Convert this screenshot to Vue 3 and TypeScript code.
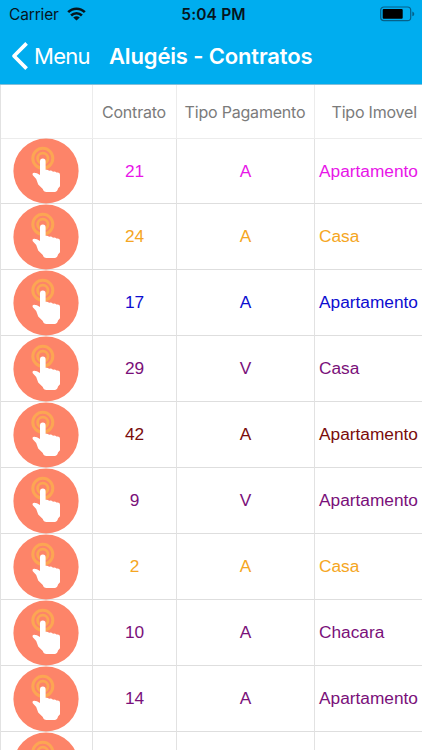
<script setup lang="ts">
interface Contract {
  id: number | string
  payment: string
  property: string
  tone: string
}

const contracts: Contract[] = [
  { id: 21, payment: 'A', property: 'Apartamento', tone: 'magenta' },
  { id: 24, payment: 'A', property: 'Casa', tone: 'orange' },
  { id: 17, payment: 'A', property: 'Apartamento', tone: 'blue' },
  { id: 29, payment: 'V', property: 'Casa', tone: 'purple' },
  { id: 42, payment: 'A', property: 'Apartamento', tone: 'maroon' },
  { id: 9, payment: 'V', property: 'Apartamento', tone: 'purple' },
  { id: 2, payment: 'A', property: 'Casa', tone: 'orange' },
  { id: 10, payment: 'A', property: 'Chacara', tone: 'purple' },
  { id: 14, payment: 'A', property: 'Apartamento', tone: 'purple' },
  { id: '', payment: '', property: '', tone: 'purple' },
]
</script>

<template>
  <div class="screen">
    <header class="top">
      <div class="status">
        <div class="network">
          <span class="carrier">Carrier</span>
          <svg class="wifi" width="19" height="14" viewBox="0 0 19 14" fill="none" stroke="#06151d" stroke-width="2.6">
            <path d="M1.2 5.2C5.8.5 13.2.5 17.8 5.2" />
            <path d="M4.1 8.5C7.1 5.5 11.9 5.5 14.9 8.5" />
            <path d="M9.5 13.4L6.2 10.4Q9.5 7.9 12.8 10.4Z" fill="#06151d" stroke="none" />
          </svg>
        </div>
        <span class="time">5:04 PM</span>
        <svg class="battery" width="35" height="16" viewBox="0 0 35 16">
          <rect x=".7" y="1" width="30" height="13.7" rx="3.2" fill="none" stroke="#05618a" stroke-width="1.2" />
          <rect x="2.7" y="3" width="20" height="9.7" rx="1" fill="#000" />
          <path d="M32.3 5.5Q34.3 6.3 34.3 7.9Q34.3 9.5 32.3 10.3Z" fill="#05618a" />
        </svg>
      </div>
      <nav class="nav">
        <button class="back" type="button">
          <svg width="18" height="28" viewBox="0 0 18 28" fill="none" stroke="#fff" stroke-width="3.7" stroke-linejoin="round">
            <path d="M15.6 1.4L3 14L15.6 26.6" />
          </svg>
          <span>Menu</span>
        </button>
        <h1>Alugéis - Contratos</h1>
      </nav>
    </header>

    <main class="grid">
      <div class="row head">
        <div class="cell"></div>
        <div class="cell">Contrato</div>
        <div class="cell">Tipo Pagamento</div>
        <div class="cell kind">Tipo Imovel</div>
      </div>
      <div v-for="(c, i) in contracts" :key="i" class="row" :class="[c.tone, { first: i === 0 }]">
        <div class="cell action">
          <svg class="tap" width="66" height="66" viewBox="0 0 66 66">
            <circle cx="33" cy="33" r="32.6" fill="#fd8469" />
            <g fill="none" stroke="#fca653">
              <circle cx="29.8" cy="20.3" r="10" stroke-width="3" />
              <circle cx="29.8" cy="20.3" r="5.2" stroke-width="2.8" />
            </g>
            <path
              d="M27 23.4Q27 20.6 29.8 20.6Q32.6 20.6 32.6 23.4V31.8Q34.4 31.2 36.2 32.8Q38.2 32.1 40 33.7Q42 33 43.4 34.4H44.6Q47 34.4 47 36.8V48.2L45 50.6Q44.4 54 41.5 54H33.5Q30.5 54 29.8 51L25.2 46.6L23.2 40.9L19.8 37.2Q18.8 35 21.2 34.7Q23.8 34.7 27 37Z"
              fill="#fff"
            />
          </svg>
        </div>
        <div class="cell">{{ c.id }}</div>
        <div class="cell">{{ c.payment }}</div>
        <div class="cell kind">{{ c.property }}</div>
      </div>
    </main>
  </div>
</template>

<style>
body {
  overflow: hidden;
}
</style>

<style scoped>
.screen {
  width: 422px;
  height: 750px;
  overflow: hidden;
  background: #fff;
  display: flex;
  flex-direction: column;
}
.top {
  flex: none;
  height: 85px;
  box-sizing: border-box;
  background: #00adef;
  border-bottom: 1px solid #83bfd9;
  font-family: Inter, sans-serif;
}
.status {
  height: 28px;
  display: grid;
  grid-template-columns: 1fr auto 1fr;
  align-items: center;
  padding: 0 7px 0 9px;
  color: #06151d;
  font-size: 15.5px;
}
.network {
  display: flex;
  align-items: center;
  gap: 8px;
}
.carrier {
  letter-spacing: -0.15px;
}
.wifi {
  margin-bottom: 1px;
}
.time {
  padding-left: 3px;
  font-weight: 600;
  letter-spacing: 0.15px;
}
.battery {
  justify-self: end;
}
.nav {
  height: 56px;
  display: flex;
  align-items: center;
  padding-left: 11px;
  color: #fff;
}
.back {
  display: flex;
  align-items: center;
  gap: 5px;
  width: 98px;
  padding: 0;
  border: 0;
  background: none;
  color: inherit;
  font: 400 22px Inter, sans-serif;
  letter-spacing: -0.7px;
}
h1 {
  margin: 0;
  font-size: 22px;
  font-weight: 600;
  letter-spacing: -0.15px;
  white-space: nowrap;
}
.grid {
  flex: none;
  border-left: 1px solid #e2e2e2;
}
.row {
  display: grid;
  grid-template-columns: 92px 84px 138px 107px;
  height: 66px;
  font-family: "Liberation Sans", Arial, sans-serif;
  font-size: 17.3px;
}
.row.first {
  height: 65px;
}
.head {
  height: 54px;
  color: #7b7b7b;
  font-family: Inter, sans-serif;
  font-size: 16px;
  letter-spacing: -0.2px;
}
.cell {
  box-sizing: border-box;
  min-width: 0;
  min-height: 0;
  display: flex;
  align-items: center;
  justify-content: center;
  border-right: 1px solid #e2e2e2;
  border-bottom: 1px solid #dedede;
  white-space: nowrap;
}
.head .cell {
  padding-top: 1px;
  padding-right: 1px;
  border-color: #ececec;
}
.cell.kind {
  justify-content: flex-start;
  padding-left: 4px;
  border-right: 0;
}
.head .kind {
  padding-left: 16.5px;
}
.action {
  padding-right: 1px;
}
.tap {
  flex: none;
  margin: -1px 0;
  filter: blur(0.6px);
}
.magenta { color: #e815e8; }
.orange { color: #f5a623; }
.blue { color: #0d0dd0; }
.purple { color: #7a107a; }
.maroon { color: #7a0c0c; }
</style>
